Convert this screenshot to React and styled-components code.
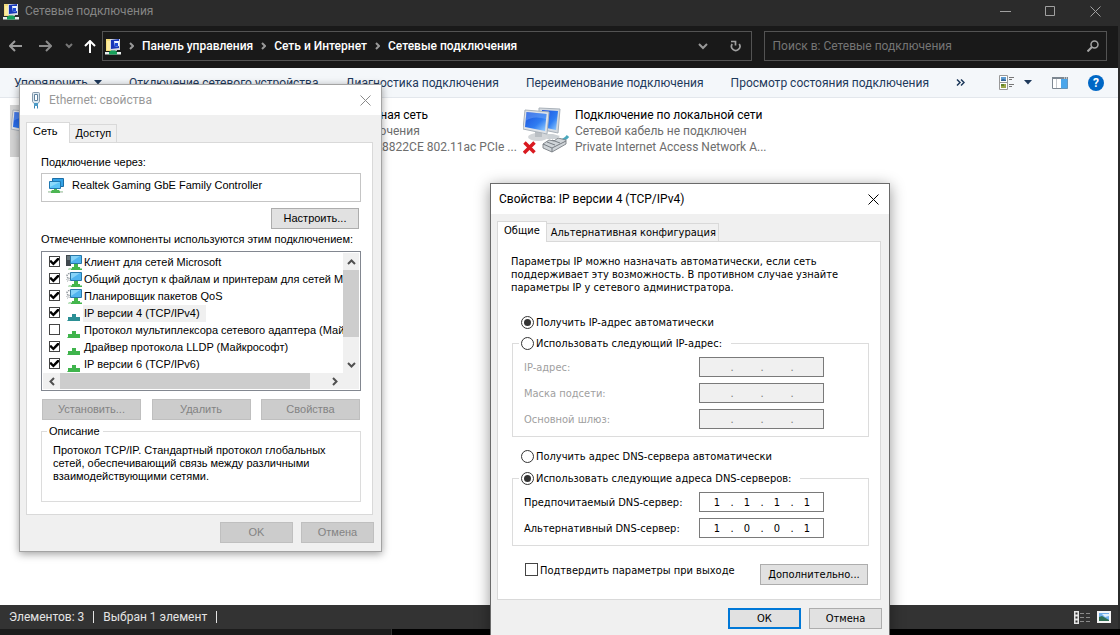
import React from "react";
import styled, { createGlobalStyle, css } from "styled-components";

const GlobalStyle = createGlobalStyle`
  *, *::before, *::after { box-sizing: border-box; }
  html, body { margin: 0; padding: 0; background: #000; }
  body { font-family: Roboto, "Open Sans", sans-serif; font-size: 12px; line-height: 16px; color: #000; }
  button, input { font: inherit; color: inherit; margin: 0; }
`;

/* ---------- Explorer window ---------- */

const Desktop = styled.div`
  position: relative;
  height: 100vh;
  overflow: hidden;
  display: flex;
  flex-direction: column;
`;

const Explorer = styled.main`
  flex: 1;
  min-height: 0;
  display: flex;
  flex-direction: column;
  background: #fff;
  border-right: 2px solid #2b2b2b;
`;

const Backdrop = styled.div`
  width: 35%;
  height: 6px;
  background: #1c1c1c;
  border-right: 1px solid #333;
`;

const TitleBar = styled.header`
  display: flex;
  align-items: center;
  height: 26px;
  padding: 0 17px 4px 3px;
  gap: 6px;
  background: #2b2b2b;
  color: #858585;
`;

const Title = styled.h1`
  flex: 1;
  margin: 0;
  font-size: inherit;
  font-weight: 400;
`;

const PlainButton = styled.button`
  display: flex;
  align-items: center;
  justify-content: center;
  flex: none;
  border: 0;
  padding: 0;
  background: none;
`;

const CaptionButtons = styled.div`
  display: flex;
  gap: 34px;
`;

const NavBar = styled.nav`
  display: flex;
  align-items: center;
  height: 42px;
  padding: 0 11px 2px 0;
  background: #191919;
`;

const NavButton = styled(PlainButton)`
  width: ${(p) => p.$width}px;
  height: 30px;
`;

const AddressBar = styled.div`
  display: flex;
  align-items: center;
  flex: 1.95;
  height: 30px;
  padding: 0 9px 0 2px;
  border: 1px solid #535353;
`;

const Crumbs = styled.ol`
  display: flex;
  align-items: center;
  flex: 1;
  margin: 0;
  padding: 0;
  list-style: none;
`;

const Crumb = styled.li`
  display: flex;
  align-items: center;
  white-space: nowrap;
`;

const CrumbArrow = styled.span`
  display: flex;
  padding: 0 8px;
`;

const CrumbLink = styled.a`
  color: #fff;
  font-weight: 500;
  text-decoration: none;
`;

const AddressActions = styled.div`
  display: flex;
  gap: 22px;
`;

const SearchBox = styled.label`
  display: flex;
  align-items: center;
  flex: 1;
  min-width: 0;
  height: 30px;
  margin-left: 12px;
  padding: 0 7px 0 8px;
  border: 1px solid #535353;
`;

const SearchInput = styled.input`
  flex: 1;
  min-width: 0;
  border: 0;
  padding: 0;
  background: none;
  color: #ccc;
  outline: none;
  &::placeholder { color: #757575; opacity: 1; }
`;

const CommandBar = styled.div`
  display: flex;
  align-items: center;
  height: 30px;
  padding: 0 14px;
  background: #f4f7fa;
  border-bottom: 1px solid #e3e7ec;
  color: #1e395b;
`;

const Commands = styled.div`
  display: flex;
  flex: 1;
  gap: 27px;
`;

const Command = styled(PlainButton)`
  gap: 6px;
  white-space: nowrap;
`;

const ViewTools = styled.div`
  display: flex;
  align-items: center;
  gap: 20px;
`;

const ViewChooser = styled.div`
  display: flex;
  align-items: center;
  gap: 9px;
`;

const Content = styled.section`
  flex: 1;
  min-height: 0;
  padding: 7px 10px;
  display: grid;
  grid-template-columns: repeat(3, 248px);
  column-gap: 8px;
  align-content: start;
`;

const Tile = styled.article`
  display: flex;
  height: 52px;
  padding: 2px 0 0 1px;
  gap: 4px;
  background: ${(p) => (p.$selected ? "#d4d4d4" : "transparent")};
`;

const TileText = styled.div`
  flex: 1;
  min-width: 0;
  color: #6d6d6d;
`;

const TileLine = styled.p`
  margin: 0;
  white-space: nowrap;
  color: ${(p) => (p.$name ? "#000" : "inherit")};
`;

const StatusBar = styled.footer`
  display: flex;
  align-items: center;
  height: 24px;
  padding: 0 7px 0 9px;
  background: #333;
  color: #e4e4e4;
`;

const StatusItem = styled.span`
  padding-right: 9px;
  margin-right: 9px;
  border-right: 1px solid #e4e4e4;
  line-height: 12px;
  white-space: nowrap;
`;

const StatusViews = styled.div`
  display: flex;
  gap: 7px;
  margin-left: auto;
`;

/* ---------- Dialog windows ---------- */

const Dialog = styled.section`
  position: absolute;
  left: ${(p) => p.$x}px;
  top: ${(p) => p.$y}px;
  width: ${(p) => p.$width}px;
  padding-bottom: 8px;
  background: #f0f0f0;
  border: 1px solid ${(p) => (p.$active ? "#6a6a6a" : "#a3a3a3")};
  box-shadow: ${(p) => (p.$active ? "0 3px 14px rgba(0,0,0,.42)" : "0 2px 8px rgba(0,0,0,.38)")};
  font-family: ${(p) => (p.$active ? `"DejaVu Sans Condensed", "DejaVu Sans", sans-serif` : `"Liberation Sans", Arial, sans-serif`)};
  font-size: 11px;
  line-height: 13px;
`;

const DialogTitle = styled.header`
  display: flex;
  align-items: center;
  height: 30px;
  padding: 0 10px 0 ${(p) => (p.$active ? 8 : 10)}px;
  gap: 7px;
  background: #fff;
  color: ${(p) => (p.$active ? "#000" : "#999")};
  font-family: Roboto, "Open Sans", sans-serif;
  font-size: 12px;
`;

const DialogName = styled.h2`
  flex: 1;
  margin: 0;
  font-size: inherit;
  font-weight: 400;
`;

const Tabs = styled.div`
  display: flex;
  align-items: flex-end;
  padding: 7px 6px 0;
`;

const Tab = styled.button`
  height: 18px;
  padding: 0 ${(p) => p.$end ?? 4}px 0 ${(p) => p.$start ?? 4}px;
  border: 1px solid #d9d9d9;
  border-left: 0;
  border-bottom: 0;
  background: #f0f0f0;
  white-space: nowrap;
  ${(p) =>
    p.$selected &&
    css`
      height: 21px;
      margin-bottom: -1px;
      padding-bottom: 3px;
      border-left: 1px solid #d9d9d9;
      background: #fff;
      position: relative;
    `}
`;

const Panel = styled.div`
  margin: 0 8px 0 6px;
  padding: ${(p) => (p.$active ? "13px 11px 14px 13px" : "13px 11px 12px 14px")};
  background: #fff;
  border: 1px solid #d9d9d9;
`;

const Field = styled.p`
  margin: 0;
  white-space: nowrap;
`;

const Adapter = styled.output`
  display: flex;
  gap: 8px;
  height: 29px;
  margin-top: 4px;
  padding: 4px 6px;
  border: 1px solid #c5c5c5;
  line-height: 14px;
`;

const PushButton = styled.button`
  flex: none;
  width: ${(p) => p.$width ?? 73}px;
  height: 21px;
  padding: 0;
  border: ${(p) => (p.$primary ? "2px solid #0078d7" : "1px solid #adadad")};
  background: #e1e1e1;
  white-space: nowrap;
  &:disabled { background: #ccc; border-color: #bfbfbf; color: #838383; }
`;

const ButtonRow = styled.div`
  display: flex;
  justify-content: ${(p) => (p.$spread ? "space-between" : "flex-end")};
  gap: 8px;
  margin: ${(p) => p.$margin};
`;

const ListTitle = styled(Field)`
  margin: 4px 0 5px;
`;

const ListFrame = styled.div`
  display: grid;
  grid-template-columns: 1fr 16px;
  grid-template-rows: 120px 16px;
  padding: 1px;
  border: 1px solid #828790;
`;

const List = styled.ul`
  margin: 0;
  padding: 1px 0 0 6px;
  overflow: hidden;
  list-style: none;
`;

const ListItem = styled.li`
  display: flex;
  align-items: center;
  height: 17px;
`;

const ListLabel = styled.label`
  display: flex;
  align-items: center;
  white-space: nowrap;
`;

const ListText = styled.span`
  margin-left: 1px;
  padding: 1px 6px 1px 1px;
  line-height: 15px;
  background: ${(p) => (p.$selected ? "#f0f0f0" : "transparent")};
`;

const CheckBox = styled.input.attrs({ type: "checkbox" })`
  appearance: none;
  flex: none;
  display: grid;
  place-items: center;
  width: ${(p) => p.$size}px;
  height: ${(p) => p.$size}px;
  margin: 0 ${(p) => p.$gap}px 2px 0;
  border: 1px solid #444;
  background: #fff;
  &:checked::before {
    content: "";
    width: 9px;
    height: 8px;
    background: #000;
    clip-path: polygon(0 38%, 14% 30%, 36% 58%, 86% 0, 100% 10%, 100% 30%, 38% 100%, 0 60%);
  }
`;

const Radio = styled.input.attrs({ type: "radio" })`
  appearance: none;
  flex: none;
  display: grid;
  place-items: center;
  width: 13px;
  height: 13px;
  border: 1px solid #333;
  border-radius: 50%;
  background: #fff;
  &:checked::before {
    content: "";
    width: 7px;
    height: 7px;
    border-radius: 50%;
    background: #333;
  }
`;

const Choice = styled.label`
  display: flex;
  align-items: center;
  gap: 2px;
  height: 13px;
  margin: ${(p) => p.$margin ?? 0};
  white-space: nowrap;
`;

const ScrollBar = styled.div`
  display: flex;
  flex-direction: ${(p) => (p.$vertical ? "column" : "row")};
  background: #f0f0f0;
`;

const ScrollButton = styled(PlainButton)`
  width: ${(p) => (p.$vertical ? 16 : 17)}px;
  height: ${(p) => (p.$vertical ? 17 : 16)}px;
`;

const Track = styled.div`
  display: flex;
  flex: 1;
  flex-direction: inherit;
`;

const Thumb = styled.div`
  flex: 0 0 ${(p) => p.$share}%;
  background: #cdcdcd;
`;

const Corner = styled.div`
  background: #f0f0f0;
`;

const Group = styled.fieldset`
  min-width: 0;
  margin: ${(p) => p.$margin};
  padding: ${(p) => p.$padding};
  border: 1px solid #dcdcdc;
`;

const Legend = styled.legend`
  margin-left: ${(p) => p.$indent ?? 0}px;
  padding: 0 ${(p) => p.$end}px 0 2px;
`;

const Description = styled.p`
  margin: 0;
  white-space: nowrap;
`;

const AddressRow = styled.div`
  display: flex;
  align-items: center;
  justify-content: space-between;
  height: 20px;
  margin-top: ${(p) => (p.$first ? 0 : 6)}px;
  color: ${(p) => (p.$disabled ? "#a0a0a0" : "#000")};
`;

const IpBox = styled.div`
  display: flex;
  align-items: center;
  width: 125px;
  height: 20px;
  padding: 0 3px 0 4px;
  border: 1px solid #7a7a7a;
  background: ${(p) => (p.$disabled ? "#f0f0f0" : "#fff")};
`;

const Octet = styled.input`
  width: 26px;
  height: 16px;
  flex: none;
  padding: 0;
  border: 0;
  background: none;
  text-align: center;
  outline: none;
`;

const Dot = styled.span`
  flex: none;
  width: 4px;
  text-align: center;
  color: ${(p) => (p.$disabled ? "#777" : "#000")};
`;

/* ---------- Icons ---------- */

const Stroke = ({ w, h, d, color = "currentColor", width = 1 }) => (
  <svg width={w} height={h} viewBox={`0 0 ${w} ${h}`} fill="none" stroke={color} strokeWidth={width} aria-hidden="true">
    <path d={d} />
  </svg>
);

const CloseIcon = ({ color }) => <Stroke w={11} h={11} d="M.5 .5l10 10M10.5 .5l-10 10" color={color} />;
const Caret = () => (
  <svg width="8" height="5" viewBox="0 0 8 5" aria-hidden="true"><path d="M0 0h8L4 4.500z" fill="#1e395b" /></svg>
);
const MoreIcon = () => <Stroke w={9} h={7} d="M1 .5l3 3-3 3M5 .5l3 3-3 3" color="#1e395b" width={1.5} />;

const FolderNetIcon = () => (
  <svg width="16" height="17" viewBox="0 0 16 17" aria-hidden="true">
    <path d="M1 1h4l1 1v11H1z" fill="#f3dc7c" />
    <path d="M2 3h5v9H2z" fill="#fbeb9f" />
    <path d="M5 1h10v11H5z" fill="#d8dbe2" />
    <path d="M6 2l8-1v9l-8 1z" fill="#1736b8" />
    <path d="M9 3h5v5l-4 1z" fill="#e9f2ff" />
    <path d="M10 5h3v3l-3 1z" fill="#1c49d4" />
    <path d="M6 12h6v1h-2v1h-3v-1H6z" fill="#b9bdc2" />
    <path d="M0 14h16v2.500H0z" fill="#e6eceb" />
    <path d="M4 14l2-1.500h4l2 1.500v2.500H4z" fill="#17a05a" />
  </svg>
);

const EthernetIcon = () => (
  <svg width="12" height="17" viewBox="0 0 12 17" aria-hidden="true">
    <path d="M2.500 1.500q0-1 1-1h5q1 0 1 1v8l-1.500 2h-4l-1.500-2z" fill="#dce8f1" stroke="#8499ab" />
    <path d="M4.500 2.500h3v6h-3z" fill="#fff" stroke="#60839e" />
    <path d="M4 11h4v3H4z" fill="#4d9bc7" />
    <path d="M4.500 14v2.500M7.500 14v2.500" stroke="#3a86b4" />
  </svg>
);

const AdapterIcon = () => (
  <svg width="16" height="16" viewBox="0 0 16 16" aria-hidden="true">
    <path d="M4.500 .5h11v8h-11z" fill="#35a3e6" stroke="#1c6ea6" />
    <path d="M1.500 3.500h11v7h-11z" fill="#5cc4f7" stroke="#1f78b2" />
    <path d="M2 4h10L2 9z" fill="#8ad9fb" />
    <path d="M6 11h3v1h2l1 1.500h3v1.500H0v-1.500h3L4 12h2z" fill="#4cb552" />
    <path d="M0 13.500h3V15H0zM12 13.500h3V15h-3z" fill="#cfd8cf" />
  </svg>
);

const ClientIcon = ({ kind }) => (
  <svg width="16" height="16" viewBox="0 0 16 16" aria-hidden="true">
    {kind === "client" ? (
      <>
        <path d="M0 0h5v11H0z" fill="#40484d" />
        <path d="M1 2h3M1 4h3" stroke="#8fa0a8" />
      </>
    ) : (
      <>
        <circle cx="3.500" cy="4" r="2.500" fill="#fff" stroke="#92999e" strokeDasharray="1.500 1" strokeWidth="1.500" />
        <circle cx="2" cy="8" r="1.200" fill="#fff" stroke="#92999e" strokeDasharray="1 .7" />
      </>
    )}
    <path d="M4.500 .5h11v8h-11z" fill="#4fb4ef" stroke="#2878a8" />
    <path d="M5 1h9l-9 6z" fill="#85d3f8" />
    <path d="M8 9h4v3h2v1.500h2V15H3v-1.500h3V12h2z" fill="#43b64c" />
    <path d="M2 13.500h3V15H2z" fill="#bfe2c1" />
  </svg>
);

const ProtocolIcon = ({ color = "#3fb44c" }) => (
  <svg width="16" height="16" viewBox="0 0 16 16" aria-hidden="true">
    <path d="M6 8h4v3h4v4H2v-4h4z" fill={color} />
    <path d="M1 14h13v1H1z" fill={color} opacity=".6" />
  </svg>
);

const ConnectionIcon = ({ state }) => (
  <svg width="48" height="48" viewBox="0 0 48 48" aria-hidden="true">
    <defs>
      <linearGradient id={`screen-${state}`} x1="0" y1="0" x2="1" y2="1">
        <stop offset="0" stopColor="#1b50dc" />
        <stop offset=".6" stopColor="#2f7df2" />
        <stop offset="1" stopColor="#9bd2ff" />
      </linearGradient>
    </defs>
    <path d="M21 27h9l7 2-4 3h-9z" fill="#cdd2d6" />
    <path d="M16 1l21 1-2 24-19-4z" fill="#d5dae0" stroke="#a9b1b9" />
    <path d="M19 3l16 1-2 19-14-3z" fill={`url(#screen-${state})`} />
    <ellipse cx="15" cy="30" rx="10" ry="4" fill="#d3d6d9" />
    <path d="M12 25h7v5h-7z" fill="#b9bec3" />
    <path d="M2 3l24 2-2 22L0 22z" fill="#dfe3e8" stroke="#a9b1b9" />
    <path d="M3.500 5l20 2-1.500 17L2 20z" fill={`url(#screen-${state})`} />
    <path d="M3.500 5l20 2-.5 5Q10 8 2.500 14z" fill="#8fbcfb" opacity=".35" />
    <path d="M36 34q5 0 9-5" stroke="#49a8bd" strokeWidth="3" fill="none" />
    <path d="M20 37l6-4 5 1 4-3 8 2v4l-14 8-9-4z" fill="#cfd4d8" stroke="#84898e" />
    <path d="M20 37l9 4 14-7M29 41v4M24 35l8 3M29 33l8 3" fill="none" stroke="#777d83" />
    {state === "unplugged" && (
      <path d="M1.500 35.500l10 10M11.500 35.500L1 46" stroke="#d91a20" strokeWidth="3.500" />
    )}
  </svg>
);

const BackIcon = () => <Stroke w={13} h={12} d="M6 1L1 6l5 5M1 6h12" color="#9a9a9a" width={2} />;
const ForwardIcon = () => <Stroke w={13} h={12} d="M7 1l5 5-5 5M12 6H0" color="#8a8a8a" width={2} />;
const HistoryIcon = () => <Stroke w={8} h={6} d="M1 1l3 3 3-3" color="#777" width={2} />;
const UpIcon = () => <Stroke w={12} h={13} d="M1 6l5-5 5 5M6 1v12" color="#fff" width={2} />;

const SearchIcon = () => (
  <svg width="12" height="12" viewBox="0 0 12 12" fill="none" stroke="#a5a5a5" aria-hidden="true">
    <circle cx="7.500" cy="4.500" r="3.500" strokeWidth="1.500" />
    <path d="M5 7L.5 11.500" strokeWidth="2" />
  </svg>
);
const RefreshIcon = () => (
  <svg width="12" height="12" viewBox="0 0 12 12" fill="none" stroke="#a0a0a0" strokeWidth="1.700" aria-hidden="true">
    <path d="M2.200 4a4.200 4.200 0 1 0 7 0M1 1.500h4.500v4" />
  </svg>
);
const TilesIcon = () => (
  <svg width="16" height="16" viewBox="0 0 16 16" fill="none" aria-hidden="true">
    <path d="M.5 .5h8v14h-8zM.5 7.500h8" fill="#fff" stroke="#999" />
    <path d="M2 2h5v4H2z" fill="#5d9bd0" /><path d="M2 9h5v4H2z" fill="#9aa648" />
    <path d="M2 5l2-1 3 1v1H2z" fill="#336496" /><path d="M2 9h3v2H2z" fill="#62842c" />
    <path d="M10 2.500h5M10 4.500h3M10 9.500h5M10 11.500h3" stroke="#777" />
  </svg>
);
const PreviewIcon = () => (
  <svg width="16" height="12" viewBox="0 0 16 12" aria-hidden="true">
    <path d="M.5 .5h15v11H.5z" fill="#fff" stroke="#7d8791" />
    <path d="M0 0h16v2H0z" fill="#7d8791" /><path d="M4.500 2v9" stroke="#c5c9ce" />
    <path d="M9 2h6.500v9.500H9z" fill="#4ba6ea" /><path d="M12 1h1M14 1h1" stroke="#fff" />
  </svg>
);
const HelpBadge = styled.span`
  display: grid;
  place-items: center;
  width: 16px;
  height: 16px;
  border-radius: 50%;
  background: #0067c5;
  color: #fff;
  font-weight: 700;
`;
const DetailsIcon = () => (
  <svg width="16" height="13" viewBox="0 0 16 13" aria-hidden="true">
    <path d="M0 0h5v13H0z" fill="#e6e6e6" />
    <path d="M1.500 1.500h2v2h-2zM1.500 5.500h2v2h-2zM1.500 9.500h2v2h-2z" fill="#333" />
    <path d="M6 2.500h4M12 2.500h4M6 6.500h4M12 6.500h4M6 10.500h4M12 10.500h4" stroke="#8b8b8b" />
  </svg>
);
const LargeIcon = () => (
  <svg width="14" height="12" viewBox="0 0 14 12" aria-hidden="true">
    <path d="M0 0h14v12H0z" fill="#f4f4f4" /><path d="M2 2h10v8H2z" fill="#71aee9" />
    <path d="M2 6l3-1 7 4v1H2z" fill="#2e6e52" /><path d="M5 3h7v2L8 6z" fill="#e0effb" />
  </svg>
);

/* ---------- Data ---------- */

const crumbs = ["Панель управления", "Сеть и Интернет", "Сетевые подключения"];

const commands = [
  "Отключение сетевого устройства",
  "Диагностика подключения",
  "Переименование подключения",
  "Просмотр состояния подключения",
];

const connections = [
  { name: "Ethernet", status: "Сеть", device: "Realtek Gaming GbE", state: "active", selected: true },
  { name: "Беспроводная сеть", status: "Нет подключения", device: "Realtek RTL8822CE 802.11ac PCIe ...", state: "offline" },
  { name: "Подключение по локальной сети", status: "Сетевой кабель не подключен", device: "Private Internet Access Network A...", state: "unplugged" },
];

const components = [
  { text: "Клиент для сетей Microsoft", kind: "client", on: true },
  { text: "Общий доступ к файлам и принтерам для сетей Microsoft", kind: "service", on: true },
  { text: "Планировщик пакетов QoS", kind: "service", on: true },
  { text: "IP версии 4 (TCP/IPv4)", on: true, selected: true },
  { text: "Протокол мультиплексора сетевого адаптера (Майкрософт)", on: false },
  { text: "Драйвер протокола LLDP (Майкрософт)", on: true },
  { text: "IP версии 6 (TCP/IPv6)", on: true },
];

const IpField = ({ id, label, value = ["", "", "", ""], disabled, first }) => (
  <AddressRow $disabled={disabled} $first={first}>
    <label htmlFor={id}>{label}</label>
    <IpBox $disabled={disabled}>
      {value.map((octet, i) => (
        <React.Fragment key={i}>
          {i > 0 && <Dot $disabled={disabled}>.</Dot>}
          <Octet id={i ? undefined : id} aria-label={`${label} ${i + 1}`} defaultValue={octet} disabled={disabled} />
        </React.Fragment>
      ))}
    </IpBox>
  </AddressRow>
);

const EthernetDialog = () => (
  <Dialog $x={19} $y={84} $width={363} aria-label="Ethernet: свойства">
    <DialogTitle>
      <EthernetIcon />
      <DialogName>Ethernet: свойства</DialogName>
      <PlainButton aria-label="Закрыть"><CloseIcon color="#8a8a8a" /></PlainButton>
    </DialogTitle>
    <Tabs role="tablist">
      <Tab role="tab" aria-selected="true" $selected $start={6} $end={12}>Сеть</Tab>
      <Tab role="tab" aria-selected="false" $start={5} $end={5}>Доступ</Tab>
    </Tabs>
    <Panel>
      <Field>Подключение через:</Field>
      <Adapter><AdapterIcon />Realtek Gaming GbE Family Controller</Adapter>
      <ButtonRow $margin="6px 2px 0 0">
        <PushButton $width={88}>Настроить...</PushButton>
      </ButtonRow>
      <ListTitle>Отмеченные компоненты используются этим подключением:</ListTitle>
      <ListFrame>
        <List>
          {components.map((c) => (
            <ListItem key={c.text}>
              <ListLabel>
                <CheckBox $size={11} $gap={6} defaultChecked={c.on} />
                {c.kind ? <ClientIcon kind={c.kind} /> : <ProtocolIcon color={c.selected ? "#2c8f95" : undefined} />}
                <ListText $selected={c.selected}>{c.text}</ListText>
              </ListLabel>
            </ListItem>
          ))}
        </List>
        <ScrollBar $vertical>
          <ScrollButton $vertical aria-label="Вверх"><Stroke w={9} h={6} d="M1 5l3.500-3.500L8 5" color="#505050" width={2} /></ScrollButton>
          <Track><Thumb $share={78} /></Track>
          <ScrollButton $vertical aria-label="Вниз"><Stroke w={9} h={6} d="M1 1l3.500 3.500L8 1" color="#505050" width={2} /></ScrollButton>
        </ScrollBar>
        <ScrollBar>
          <ScrollButton aria-label="Влево"><Stroke w={6} h={9} d="M5 1L1.500 4.500 5 8" color="#505050" width={2} /></ScrollButton>
          <Track><Thumb $share={94} /></Track>
          <ScrollButton aria-label="Вправо"><Stroke w={6} h={9} d="M1 1l3.500 3.500L1 8" color="#505050" width={2} /></ScrollButton>
        </ScrollBar>
        <Corner />
      </ListFrame>
      <ButtonRow $spread $margin="8px 1px 0 1px">
        <PushButton $width={99} disabled>Установить...</PushButton>
        <PushButton $width={99} disabled>Удалить</PushButton>
        <PushButton $width={99} disabled>Свойства</PushButton>
      </ButtonRow>
      <Group $margin="5px 0 0 0" $padding="6px 11px 18px">
        <Legend $indent={-6} $end={3}>Описание</Legend>
        <Description>
          Протокол TCP/IP. Стандартный протокол глобальных<br />
          сетей, обеспечивающий связь между различными<br />
          взаимодействующими сетями.
        </Description>
      </Group>
    </Panel>
    <ButtonRow $margin="7px 7px 0 0">
      <PushButton disabled>OK</PushButton>
      <PushButton disabled>Отмена</PushButton>
    </ButtonRow>
  </Dialog>
);

const Ipv4Dialog = () => (
  <Dialog $active $x={490} $y={183} $width={400} aria-label="Свойства: IP версии 4 (TCP/IPv4)">
    <DialogTitle $active>
      <DialogName>Свойства: IP версии 4 (TCP/IPv4)</DialogName>
      <PlainButton aria-label="Закрыть"><CloseIcon color="#000" /></PlainButton>
    </DialogTitle>
    <Tabs role="tablist">
      <Tab role="tab" aria-selected="true" $selected $start={6} $end={6}>Общие</Tab>
      <Tab role="tab" aria-selected="false" $end={2}>Альтернативная конфигурация</Tab>
    </Tabs>
    <Panel $active>
      <Description>
        Параметры IP можно назначать автоматически, если сеть<br />
        поддерживает эту возможность. В противном случае узнайте<br />
        параметры IP у сетевого администратора.
      </Description>
      <Choice $margin="22px 0 0 10px"><Radio name="ip" defaultChecked />Получить IP-адрес автоматически</Choice>
      <Group $margin="8px 0 0 1px" $padding="7px 44px 7px 11px">
        <Legend $indent={-5} $end={9}>
          <Choice><Radio name="ip" />Использовать следующий IP-адрес:</Choice>
        </Legend>
        <IpField id="ip" label="IP-адрес:" disabled first />
        <IpField id="mask" label="Маска подсети:" disabled />
        <IpField id="gateway" label="Основной шлюз:" disabled />
      </Group>
      <Choice $margin="13px 0 0 10px"><Radio name="dns" />Получить адрес DNS-сервера автоматически</Choice>
      <Group $margin="9px 0 0 1px" $padding="7px 44px 7px 11px">
        <Legend $indent={-5} $end={9}>
          <Choice><Radio name="dns" defaultChecked />Использовать следующие адреса DNS-серверов:</Choice>
        </Legend>
        <IpField id="dns1" label="Предпочитаемый DNS-сервер:" value={["1", "1", "1", "1"]} first />
        <IpField id="dns2" label="Альтернативный DNS-сервер:" value={["1", "0", "0", "1"]} />
      </Group>
      <ButtonRow $spread $margin="18px 1px 0 14px">
        <Choice><CheckBox $size={13} $gap={0} />Подтвердить параметры при выходе</Choice>
        <PushButton $width={108}>Дополнительно...</PushButton>
      </ButtonRow>
    </Panel>
    <ButtonRow $margin="8px 7px 0 0">
      <PushButton $primary>ОК</PushButton>
      <PushButton>Отмена</PushButton>
    </ButtonRow>
  </Dialog>
);

export default function App() {
  return (
    <Desktop>
      <GlobalStyle />
      <Explorer>
        <TitleBar>
          <FolderNetIcon />
          <Title>Сетевые подключения</Title>
          <CaptionButtons>
            <PlainButton aria-label="Свернуть"><Stroke w={11} h={11} d="M0 5.500h11" color="#a0a0a0" /></PlainButton>
            <PlainButton aria-label="Развернуть"><Stroke w={11} h={11} d="M.5 .5h9v9h-9z" color="#a0a0a0" /></PlainButton>
            <PlainButton aria-label="Закрыть"><CloseIcon color="#a0a0a0" /></PlainButton>
          </CaptionButtons>
        </TitleBar>
        <NavBar>
          <NavButton $width={30} aria-label="Назад"><BackIcon /></NavButton>
          <NavButton $width={30} aria-label="Вперёд"><ForwardIcon /></NavButton>
          <NavButton $width={18} aria-label="Последние"><HistoryIcon /></NavButton>
          <NavButton $width={24} aria-label="Вверх"><UpIcon /></NavButton>
          <AddressBar>
            <FolderNetIcon />
            <Crumbs>
              {crumbs.map((c) => (
                <Crumb key={c}>
                  <CrumbArrow><Stroke w={5} h={8} d="M1 1l3 3-3 3" color="#999" width={2} /></CrumbArrow>
                  <CrumbLink href="#">{c}</CrumbLink>
                </Crumb>
              ))}
            </Crumbs>
            <AddressActions>
              <PlainButton aria-label="Предыдущие адреса"><Stroke w={10} h={7} d="M1 1l4 4 4-4" color="#999" width={2} /></PlainButton>
              <PlainButton aria-label="Обновить"><RefreshIcon /></PlainButton>
            </AddressActions>
          </AddressBar>
          <SearchBox>
            <SearchInput type="search" aria-label="Поиск" placeholder="Поиск в: Сетевые подключения" />
            <SearchIcon />
          </SearchBox>
        </NavBar>
        <CommandBar>
          <Commands>
            <Command>Упорядочить <Caret /></Command>
            {commands.map((c) => <Command key={c}>{c}</Command>)}
            <Command aria-label="Ещё"><MoreIcon /></Command>
          </Commands>
          <ViewTools>
            <ViewChooser>
              <Command aria-label="Вид"><TilesIcon /></Command>
              <Command aria-label="Другие виды"><Caret /></Command>
            </ViewChooser>
            <Command aria-label="Область просмотра"><PreviewIcon /></Command>
            <Command aria-label="Справка"><HelpBadge>?</HelpBadge></Command>
          </ViewTools>
        </CommandBar>
        <Content>
          {connections.map((c) => (
            <Tile key={c.name} $selected={c.selected}>
              <ConnectionIcon state={c.state} />
              <TileText>
                <TileLine $name>{c.name}</TileLine>
                <TileLine>{c.status}</TileLine>
                <TileLine>{c.device}</TileLine>
              </TileText>
            </Tile>
          ))}
        </Content>
        <StatusBar>
          <StatusItem>Элементов: 3</StatusItem>
          <StatusItem>Выбран 1 элемент</StatusItem>
          <StatusViews>
            <PlainButton aria-label="Таблица"><DetailsIcon /></PlainButton>
            <PlainButton aria-label="Крупные значки"><LargeIcon /></PlainButton>
          </StatusViews>
        </StatusBar>
      </Explorer>
      <Backdrop />
      <EthernetDialog />
      <Ipv4Dialog />
    </Desktop>
  );
}
